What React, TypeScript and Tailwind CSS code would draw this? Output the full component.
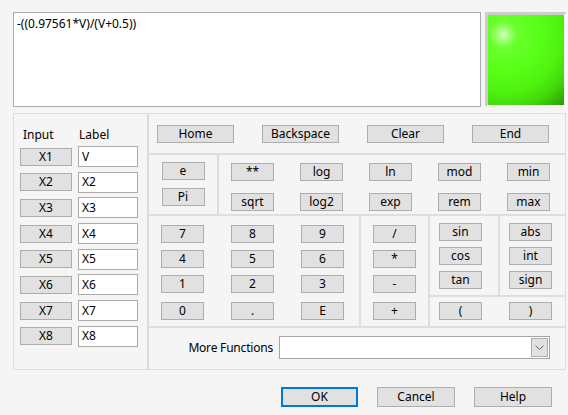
import React from "react";

const btn =
  "flex items-center justify-center border border-[#adadad] bg-[#e1e1e1] text-[12px] leading-none text-black";

function Btn({ label, cls = "w-[43px] h-[18px]" }: { label: string; cls?: string }) {
  return <div className={`${btn} ${cls}`}>{label}</div>;
}

const inputs = ["V", "X2", "X3", "X4", "X5", "X6", "X7", "X8"];

const numRows = [
  ["7", "8", "9", "/"],
  ["4", "5", "6", "*"],
  ["1", "2", "3", "-"],
  ["0", ".", "E", "+"],
];

export default function App() {
  return (
    <div className="relative h-[415px] w-[568px] overflow-hidden bg-[#f5f5f5] font-['Noto_Sans',sans-serif] text-[12px] text-black">
      <div className="pl-[13px] pt-[12px]">
        {/* expression + colour swatch */}
        <div className="flex h-[95px]">
          <div className="h-[95px] w-[468px] border border-[#ababab] bg-white pl-[3px] pt-[3px] leading-[16px]">
            -((0.97561*V)/(V+0.5))
          </div>
          <div className="ml-[4px] h-[95px] w-[82px] border-l-[3px] border-t-[3px] border-r-[3px] border-b-[2px] border-l-[#cdcdcd] border-t-[#cdcdcd] border-r-[#fbfbfb] border-b-[#fbfbfb]">
            <div className="h-full w-full bg-[radial-gradient(circle_farthest-corner_at_20%_22%,#d4ffbc_0%,#a4ff78_6%,#6aff2e_15%,#58ff16_40%,#50f210_62%,#42d60a_80%,#2a9a02_100%)]" />
          </div>
        </div>

        <div className="mt-[6px] flex">
          {/* inputs */}
          <div className="h-[257px] w-[135px] border border-[#dcdcdc] pl-[6px] pt-[13px]">
            <div className="flex h-[16px] items-center leading-[16px]">
              <span className="w-[56px] pl-[3px]">Input</span>
              <span className="pl-[3px]">Label</span>
            </div>
            <div className="mt-[3px] flex flex-col gap-[4.7px]">
              {inputs.map((v, i) => (
                <div key={i} className="flex h-[21px] items-center gap-[6px]">
                  <Btn label={`X${i + 1}`} cls="w-[52px] h-[18px]" />
                  <div className="flex h-[21px] w-[60px] items-center border border-[#ababab] bg-white pl-[3px]">
                    {v}
                  </div>
                </div>
              ))}
            </div>
          </div>

          {/* keypad */}
          <div className="flex h-[257px] w-[418px] flex-col border border-[#dcdcdc]">
            <div className="flex h-[39px] items-center gap-[28px] pl-[8px]">
              {["Home", "Backspace", "Clear", "End"].map((l) => (
                <Btn key={l} label={l} cls="w-[77px] h-[18px]" />
              ))}
            </div>
            <div className="h-[2px] bg-[#dedede]" />

            <div className="flex h-[59px]">
              <div className="flex w-[68px] flex-col items-center gap-[8px] pt-[7px]">
                <Btn label="e" />
                <Btn label="Pi" />
              </div>
              <div className="w-[2px] bg-[#dedede]" />
              <div className="grid grid-cols-[repeat(5,43px)] gap-x-[26px] gap-y-[8px] pl-[12px] pt-[8px]">
                {["**", "log", "ln", "mod", "min", "sqrt", "log2", "exp", "rem", "max"].map((l) => (
                  <Btn key={l} label={l} />
                ))}
              </div>
            </div>
            <div className="h-[2px] bg-[#dedede]" />

            <div className="flex h-[110px]">
              <div className="flex w-[210px] flex-col gap-[7px] pl-[12px] pt-[9px]">
                {numRows.map((r, i) => (
                  <div key={i} className={`flex gap-[27px] ${i === 3 ? "mt-[2px]" : ""}`}>
                    {r.slice(0, 3).map((l) => (
                      <Btn key={l} label={l} />
                    ))}
                  </div>
                ))}
              </div>
              <div className="w-[2px] bg-[#dedede]" />
              <div className="flex w-[67px] flex-col items-center gap-[7px] pt-[9px]">
                {numRows.map((r, i) => (
                  <div key={i} className={i === 3 ? "mt-[2px]" : ""}>
                    <Btn label={r[3]} />
                  </div>
                ))}
              </div>
              <div className="w-[2px] bg-[#dedede]" />
              <div className="flex flex-1 flex-col">
                <div className="flex h-[79px]">
                  <div className="flex w-[68px] flex-col gap-[6px] pl-[9px] pt-[7px]">
                    {["sin", "cos", "tan"].map((l) => (
                      <Btn key={l} label={l} />
                    ))}
                  </div>
                  <div className="w-[2px] bg-[#dedede]" />
                  <div className="flex flex-col gap-[6px] pl-[9px] pt-[7px]">
                    {["abs", "int", "sign"].map((l) => (
                      <Btn key={l} label={l} />
                    ))}
                  </div>
                </div>
                <div className="h-[2px] bg-[#dedede]" />
                <div className="flex gap-[27px] pl-[9px] pt-[5px]">
                  <Btn label="(" />
                  <Btn label=")" />
                </div>
              </div>
            </div>
            <div className="h-[2px] bg-[#dedede]" />

            <div className="flex flex-1 items-center justify-end gap-[6px] pr-[15px] pb-[2px]">
              <span className="tracking-[-0.2px]">More Functions</span>
              <div className="flex h-[23px] w-[271px] items-center justify-end border border-[#a5a5a5] bg-white pr-[1px]">
                <div className="flex h-[19px] w-[17px] items-center justify-center border border-[#adadad] bg-[#e1e1e1]">
                  <svg width="9" height="5" viewBox="0 0 9 5" fill="none">
                    <path d="M0.5 0.5 L4.5 4.5 L8.5 0.5" stroke="#606060" strokeWidth="1" />
                  </svg>
                </div>
              </div>
            </div>
          </div>
        </div>

        {/* dialog buttons */}
        <div className="mt-[17px] flex justify-end gap-[19px] pr-[16px]">
          <div className="flex h-[20px] w-[77px] items-center justify-center border-2 border-[#0078d7] bg-[#e1e1e1] leading-none">
            OK
          </div>
          <Btn label="Cancel" cls="w-[78px] h-[20px]" />
          <Btn label="Help" cls="w-[78px] h-[20px]" />
        </div>
      </div>
    </div>
  );
}
